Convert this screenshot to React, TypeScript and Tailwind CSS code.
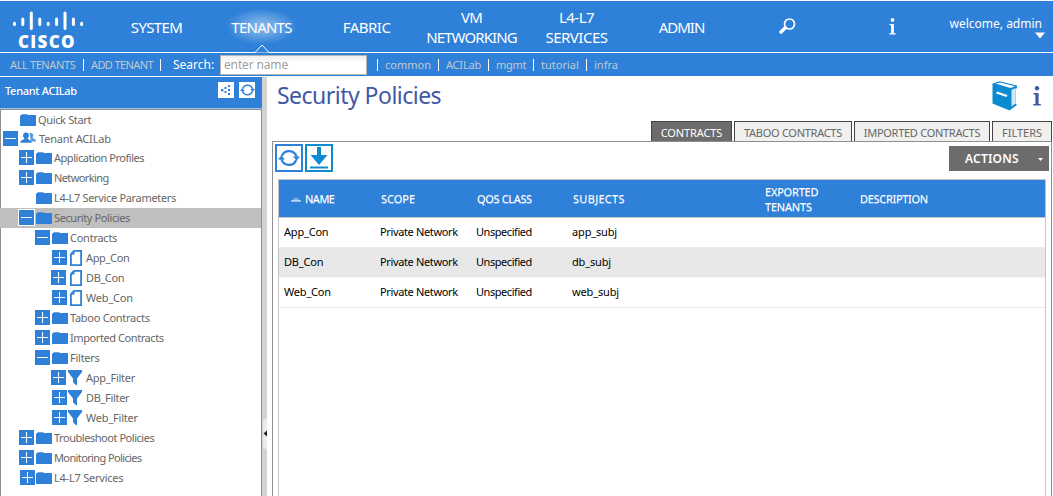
import React from "react";

type Kind = "folder" | "users" | "doc" | "filter";
type Node = {
  label: string;
  indent: string;
  toggle?: "+" | "-";
  kind: Kind;
  selected?: boolean;
  tracking?: string;
  short?: boolean;
};

const L1 = "pl-[19px]";
const L2 = "pl-[35px]";
const L3 = "pl-[52px]";
const L3B = "pl-[51px]";

const nodes: Node[] = [
  { label: "Quick Start", indent: "pl-[20px]", kind: "folder", short: true, tracking: "tracking-[-0.35px]" },
  { label: "Tenant ACILab", indent: "pl-[3px]", toggle: "-", kind: "users", short: true, tracking: "tracking-[-0.2px]" },
  { label: "Application Profiles", indent: L1, toggle: "+", kind: "folder", tracking: "tracking-[-0.46px]" },
  { label: "Networking", indent: L1, toggle: "+", kind: "folder", tracking: "tracking-[-0.6px]" },
  { label: "L4-L7 Service Parameters", indent: "pl-[36px]", kind: "folder", tracking: "tracking-[-0.33px]" },
  { label: "Security Policies", indent: L1, toggle: "-", kind: "folder", selected: true, tracking: "tracking-[-0.4px]" },
  { label: "Contracts", indent: L2, toggle: "-", kind: "folder", tracking: "tracking-[-0.25px]" },
  { label: "App_Con", indent: L3, toggle: "+", kind: "doc", tracking: "tracking-[-0.35px]" },
  { label: "DB_Con", indent: L3B, toggle: "+", kind: "doc", tracking: "tracking-[-0.4px]" },
  { label: "Web_Con", indent: L3, toggle: "+", kind: "doc", tracking: "tracking-[-0.2px]" },
  { label: "Taboo Contracts", indent: L2, toggle: "+", kind: "folder", tracking: "tracking-[-0.27px]" },
  { label: "Imported Contracts", indent: L2, toggle: "+", kind: "folder", tracking: "tracking-[-0.42px]" },
  { label: "Filters", indent: L2, toggle: "-", kind: "folder", tracking: "tracking-[-0.25px]" },
  { label: "App_Filter", indent: L3B, toggle: "+", kind: "filter", tracking: "tracking-[-0.25px]" },
  { label: "DB_Filter", indent: L3, toggle: "+", kind: "filter", tracking: "tracking-[-0.32px]" },
  { label: "Web_Filter", indent: L3, toggle: "+", kind: "filter", tracking: "tracking-[-0.2px]" },
  { label: "Troubleshoot Policies", indent: L1, toggle: "+", kind: "folder", tracking: "tracking-[-0.46px]" },
  { label: "Monitoring Policies", indent: L1, toggle: "+", kind: "folder", tracking: "tracking-[-0.62px]" },
  { label: "L4-L7 Services", indent: "pl-[20px]", toggle: "+", kind: "folder", tracking: "tracking-[-0.22px]" },
];

const Toggle = ({ sign, outlined }: { sign: "+" | "-"; outlined?: boolean }) => (
  <svg className={outlined ? "h-[15px] w-[15px] shrink-0 outline outline-white" : "h-[15px] w-[15px] shrink-0"} viewBox="0 0 15 15" shapeRendering="crispEdges">
    <rect width="15" height="15" fill="#2e80d8" />
    <rect x="2" y="7" width="11" height="1" fill="#fff" />
    {sign === "+" && <rect x="7" y="2" width="1" height="11" fill="#fff" />}
  </svg>
);

const KindIcon = ({ kind }: { kind: Kind }) => {
  if (kind === "folder")
    return (
      <svg className="mt-px h-3 w-4 shrink-0" viewBox="0 0 16 12">
        <path d="M0 2 L1 1 L2 .2 H7 L8 1 H16 V12 H0Z" fill="#2e80d8" />
      </svg>
    );
  if (kind === "users")
    return (
      <svg className="-mt-px h-3 w-4 shrink-0" viewBox="0 0 16 12">
        <path d="M9.500 1.200c2-.6 3.700.2 3.700 2.200 0 1.200-.5 2-.9 2.700 1.500.8 3.700 1 3.700 3.400h-5z" fill="#2e80d8" opacity=".8" />
        <path d="M6 .6c1.900 0 2.900 1.300 2.900 3 0 1.300-.5 2.100-1.200 2.800 .2 1.400 4 1.200 4 4.400H.3c0-3.200 3.800-3 4-4.400-.7-.7-1.200-1.500-1.200-2.800 0-1.700 1-3 2.900-3z" fill="#2e80d8" />
      </svg>
    );
  if (kind === "doc")
    return (
      <svg className="mt-px mr-[2px] ml-px h-4 w-3 shrink-0" viewBox="0 0 12 16">
        <path d="M4 .9 H11.100 V15.100 H.9 V4Z" fill="#fff" stroke="#2e80d8" strokeWidth="1.800" />
        <path d="M4.500 1 V4.500 H1Z" fill="#2e80d8" />
      </svg>
    );
  return (
    <svg className="mt-px h-4 w-[15px] shrink-0" viewBox="0 0 15 16">
      <path d="M0 0H14V2L9 8.500V15.800L5 12.500V8.500L0 2Z" fill="#2e80d8" />
    </svg>
  );
};

const iconGap = (n: Node) => {
  if (!n.toggle) return "";
  if (n.indent === "pl-[20px]") return "ml-px";
  const wide = n.indent === L3B;
  if (n.kind === "filter") return wide ? "ml-[2px]" : "ml-px";
  return wide ? "ml-[3px]" : "ml-[2px]";
};

const textGap: Record<Kind, string> = {
  folder: "ml-[2px]",
  users: "ml-[3px]",
  doc: "ml-[2px]",
  filter: "ml-[3px]",
};

const TreeRow = ({ n }: { n: Node }) => (
  <div className={`flex items-center ${n.short ? "h-[19px]" : "h-5 pb-px"} ${n.selected ? "bg-[#bfbfbf]" : ""} ${n.indent} -ml-px`}>
    {n.toggle && <Toggle sign={n.toggle} outlined={n.selected} />}
    <span className={`flex items-center ${iconGap(n)}`}>
      <KindIcon kind={n.kind} />
      <span className={`${textGap[n.kind]} leading-4 ${n.tracking ?? ""}`}>{n.label}</span>
    </span>
  </div>
);

const Refresh = ({ className }: { className: string }) => (
  <svg className={className} viewBox="0 0 22 20" fill="none" stroke="#2e80d8">
    <path d="M3.800 8A7.800 7.800 0 0 1 18.600 9" strokeWidth="2.200" />
    <path d="M18.200 12A7.800 7.800 0 0 1 3.400 11" strokeWidth="2.200" />
    <path d="M14.800 8.500h7.200l-3.300 4zM0 11.500h7L3.300 7.500z" fill="#2e80d8" stroke="none" />
  </svg>
);

const Info = ({ className }: { className: string }) => (
  <svg className={className} viewBox="0 0 8 20" fill="currentColor">
    <circle cx="4" cy="2.300" r="2.200" />
    <path d="M.5 7H5.600V18H7.800V19.500H.3V18H2.400V8.500H.5Z" />
  </svg>
);

const navItem = "flex w-[105px] items-center justify-center text-center leading-5";

const columns = [
  { label: "SCOPE", cls: "w-[96px] tracking-[0px]" },
  { label: "QOS CLASS", cls: "w-[96px] tracking-[-0.35px]" },
  { label: "SUBJECTS", cls: "w-[192px] tracking-[0.3px]" },
];

const rows = [
  { name: "App_Con", subj: "app_subj", cls: "bg-white border-[#ececec]" },
  { name: "DB_Con", subj: "db_subj", cls: "bg-[#e8e8e8] border-[#f4f4f4]" },
  { name: "Web_Con", subj: "web_subj", cls: "bg-white border-[#ececec]" },
];

const tab = "flex items-end justify-center border border-b-0 border-[#444] whitespace-nowrap leading-[15px] pb-px";

export default function App() {
  return (
    <div className="flex h-[496px] w-[1053px] flex-col overflow-hidden bg-white pt-px font-['Noto_Sans',sans-serif] text-[11px] text-black">
      <header className="flex h-[51px] shrink-0 bg-[#2e80d8] text-[15px] text-white">
        <div className="w-[104px] pt-[10px] pl-[12px]">
          <svg className="h-[21px] w-[72px]" viewBox="0 0 72 21" stroke="#fff" strokeWidth="3" strokeLinecap="round">
            <path d="M2.500 12.300V13.500M10.800 8V13.500M19.300 2V17.500M27.800 8V13.500M36.200 12.300V13.500M44.600 8V13.500M53 2V17.500M61.400 8V13.500M69.600 12.300V13.500" />
          </svg>
          <div className="pt-px pl-[6px] font-['Open_Sans',sans-serif] text-[17px] leading-[17px] font-extrabold tracking-[1.3px]">CISCO</div>
        </div>
        <div className={`${navItem} tracking-[-0.65px]`}>SYSTEM</div>
        <div className={`${navItem} relative bg-[radial-gradient(ellipse_36px_18px_at_50%_50%,#8ab9eb_0%,#69a5e4_45%,#2e80d8_100%)] tracking-[-0.75px]`}>
          TENANTS
          <svg className="absolute top-[43px] left-[46px] h-[9px] w-[14px]" viewBox="0 0 14 9">
            <path d="M0 8.500L7 1L14 8.500" fill="#2e80d8" stroke="#fff" />
          </svg>
        </div>
        <div className={`${navItem} tracking-[-0.5px]`}>FABRIC</div>
        <div className={`${navItem} tracking-[-0.9px]`}>VM<br />NETWORKING</div>
        <div className={`${navItem} tracking-[-0.5px]`}>L4-L7<br />SERVICES</div>
        <div className={`${navItem} tracking-[-1px]`}>ADMIN</div>
        <div className={navItem}>
          <svg className="relative left-px -top-px h-4 w-[17px]" viewBox="0 0 17 16" fill="none" stroke="#fff">
            <circle cx="10.500" cy="6" r="5" strokeWidth="1.700" />
            <path d="M6 10L2 14" strokeWidth="3.400" strokeLinecap="round" />
          </svg>
        </div>
        <div className={`${navItem} pl-px`}><Info className="h-[17px] w-[7px]" /></div>
        <div className="flex flex-1 flex-col items-end pt-[15px] pr-[8px] text-[12px] leading-4">
          <span className="mr-[3px] whitespace-nowrap">welcome, admin</span>
          <svg className="h-[7px] w-[10px]" viewBox="0 0 10 7"><path d="M0 .5H10L5 6.500Z" fill="#fff" /></svg>
        </div>
      </header>

      <div className="mt-px flex h-[23px] shrink-0 items-center bg-[#2e80d8] pt-px text-[11px] whitespace-nowrap text-[#c0c9d3]">
        <span className="w-[74px] pl-[10px] tracking-[-0.38px]">ALL TENANTS</span>
        <span className="ml-[9px] h-3 w-px bg-white" />
        <span className="ml-[7px] w-[62px] tracking-[-0.6px]">ADD TENANT</span>
        <span className="ml-[7px] h-3 w-px bg-white" />
        <span className="ml-[12px] w-[47px] text-[12px] text-white">Search:</span>
        <span className="flex h-[20px] w-[147px] items-center border border-[#b4b4b4] bg-linear-to-b from-[#eeeeee] to-white to-40% pl-[3px] text-[12px] tracking-[-0.15px] text-[#a0a0a0]">enter name</span>
        <span className="ml-[10px] h-3 w-px bg-white" />
        <span className="ml-[7px] w-[53px]">common</span>
        <span className="h-3 w-px bg-white" />
        <span className="ml-[7px] w-[42px] tracking-[-0.2px]">ACILab</span>
        <span className="h-3 w-px bg-white" />
        <span className="ml-[7px] w-[37px] tracking-[-0.3px]">mgmt</span>
        <span className="h-3 w-px bg-white" />
        <span className="ml-[7px] w-[45px]">tutorial</span>
        <span className="h-3 w-px bg-white" />
        <span className="ml-[7px]">infra</span>
      </div>

      <main className="mt-px flex min-h-0 flex-1">
        <aside className="flex w-[262px] shrink-0 flex-col">
          <div className="flex h-[32px] shrink-0 items-start border-b border-[#9dc3ec] bg-[#2e80d8] text-white">
            <span className="flex-1 pt-[6px] pl-[5px] leading-4 font-medium tracking-[-0.3px]">Tenant ACILab</span>
            <span className="mt-[5px] mr-[5px] flex h-4 w-4 items-center justify-center bg-white">
              <svg className="h-3 w-3" viewBox="0 0 12 12" fill="#2e80d8">
                <rect x="1" y="5" width="2.400" height="2.400" /><rect x="4.500" y="3" width="2" height="2" /><rect x="4.500" y="7" width="2" height="2" />
                <rect x="8" y="1" width="2" height="2" /><rect x="8" y="5" width="2" height="2" /><rect x="8" y="9" width="2" height="2" />
              </svg>
            </span>
            <span className="mt-[5px] mr-[7px] flex h-4 w-4 items-center justify-center bg-white">
              <Refresh className="h-[14px] w-[15px]" />
            </span>
          </div>
          <div className="flex-1 border-t border-r border-l border-[#8e8e8e] text-[#666]">
            {nodes.map((n) => <TreeRow key={n.label} n={n} />)}
          </div>
        </aside>

        <div className="w-[5px] shrink-0 bg-[#d3d3d3] pt-[341px]">
          <svg className="ml-px h-[32px] w-[4px]" viewBox="0 0 4 32">
            <path d="M0 3L4 0V32L0 29Z" fill="#ebebeb" />
            <path d="M4 12.500V18.500L.5 15.500Z" fill="#222" />
          </svg>
        </div>

        <section className="flex min-w-0 flex-1 flex-col pl-[5px]">
          <div className="flex h-[44px] shrink-0 items-start pr-[12px]">
            <h1 className="flex-1 pt-[2px] pl-[5px] text-[23px] leading-8 tracking-[-0.52px] text-[#4159a4]">Security Policies</h1>
            <svg className="mt-[4px] mr-[15px] h-[30px] w-[26px]" viewBox="0 0 26 30">
              <path d="M.5 2.500L7.500 .3L25 4.500V7L23.500 8V22.500L25 24L17.500 29.500L.5 22.500Z" fill="#0d8bd0" />
              <path d="M3.500 2.600L8 1.400L23 5.200L18.500 7Z" fill="#fff" />
              <path d="M19.500 9L23.500 7V22.500L19.500 25.500Z" fill="#cfe8f6" />
              <path d="M4.500 11.500L15 15" stroke="#fff" strokeWidth="2.200" />
            </svg>
            <Info className="mt-[9px] h-[20px] w-[8px] text-[#4159a4]" />
          </div>

          <div className="flex h-[20px] shrink-0 justify-end gap-[2px] pr-px text-[#666]">
            <div className={`${tab} w-[81px] bg-[#6c6c6c] tracking-[-0.1px] text-white`}>CONTRACTS</div>
            <div className={`${tab} w-[118px] bg-[#f0f0ee] tracking-[-0.28px]`}>TABOO CONTRACTS</div>
            <div className={`${tab} w-[136px] bg-[#f0f0ee] tracking-[-0.28px]`}>IMPORTED CONTRACTS</div>
            <div className={`${tab} w-[60px] bg-[#f0f0ee]`}>FILTERS</div>
          </div>

          <div className="mr-px flex flex-1 flex-col border-t border-r border-l border-[#8e8e8e] pt-[2px] pr-[5px] pl-[5px]">
            <div className="-mr-[3px] -ml-[3px] flex h-[35px] shrink-0 gap-[2px]">
              <span className="flex h-[28px] w-[28px] items-center justify-center border-2 border-[#2e80d8]"><Refresh className="h-5 w-[22px]" /></span>
              <span className="flex h-[28px] w-[28px] items-center justify-center border-2 border-[#0d8bd0]">
                <svg className="h-[22px] w-[18px]" viewBox="0 0 18 22" fill="#0d8bd0"><path d="M7 0H11V8H17.500L9 18L.5 8H7ZM0 19.500H18V21.500H0Z" /></svg>
              </span>
              <span className="flex-1" />
              <span className="mt-[2px] flex h-[25px] w-[100px] items-center bg-[#6c6c6c] pt-px pl-[16px] text-[12px] font-semibold tracking-[0.2px] text-white">
                <span className="flex-1">ACTIONS</span>
                <svg className="mr-[6px] h-[3px] w-[5px]" viewBox="0 0 5 3"><path d="M0 0H5L2.500 3Z" fill="#fff" /></svg>
              </span>
            </div>
            <div className="flex-1 border-t border-r border-l border-[#c4c4c4]">
              <div className="flex h-[38px] items-center border-b border-[#c4c4c4] bg-[#2e80d8] leading-[15px] text-white text-shadow-[0_1px_0_#ffffff70]">
                <div className="flex w-[102px] items-center pl-[12px] tracking-[-0.5px]">
                  <svg className="mr-[4px] h-[6px] w-[10px]" viewBox="0 0 10 6"><path d="M5 1L10 5H0Z" fill="#7eafe4" /><path d="M0 4.500H10V5.500H0Z" fill="#fff" /></svg>
                  NAME
                </div>
                {columns.map((c) => <div key={c.label} className={c.cls}>{c.label}</div>)}
                <div className="w-[95px] tracking-[-0.2px]">EXPORTED<br />TENANTS</div>
                <div className="tracking-[-0.3px]">DESCRIPTION</div>
              </div>
              {rows.map((r) => (
                <div key={r.name} className={`flex h-[30px] items-center border-b ${r.cls}`}>
                  <div className="w-[101px] pl-[5px] tracking-[-0.2px]">{r.name}</div>
                  <div className="w-[96px] tracking-[-0.36px]">Private Network</div>
                  <div className="w-[96px] tracking-[-0.45px]">Unspecified</div>
                  <div className="tracking-[-0.15px]">{r.subj}</div>
                </div>
              ))}
            </div>
          </div>
        </section>
      </main>
    </div>
  );
}
